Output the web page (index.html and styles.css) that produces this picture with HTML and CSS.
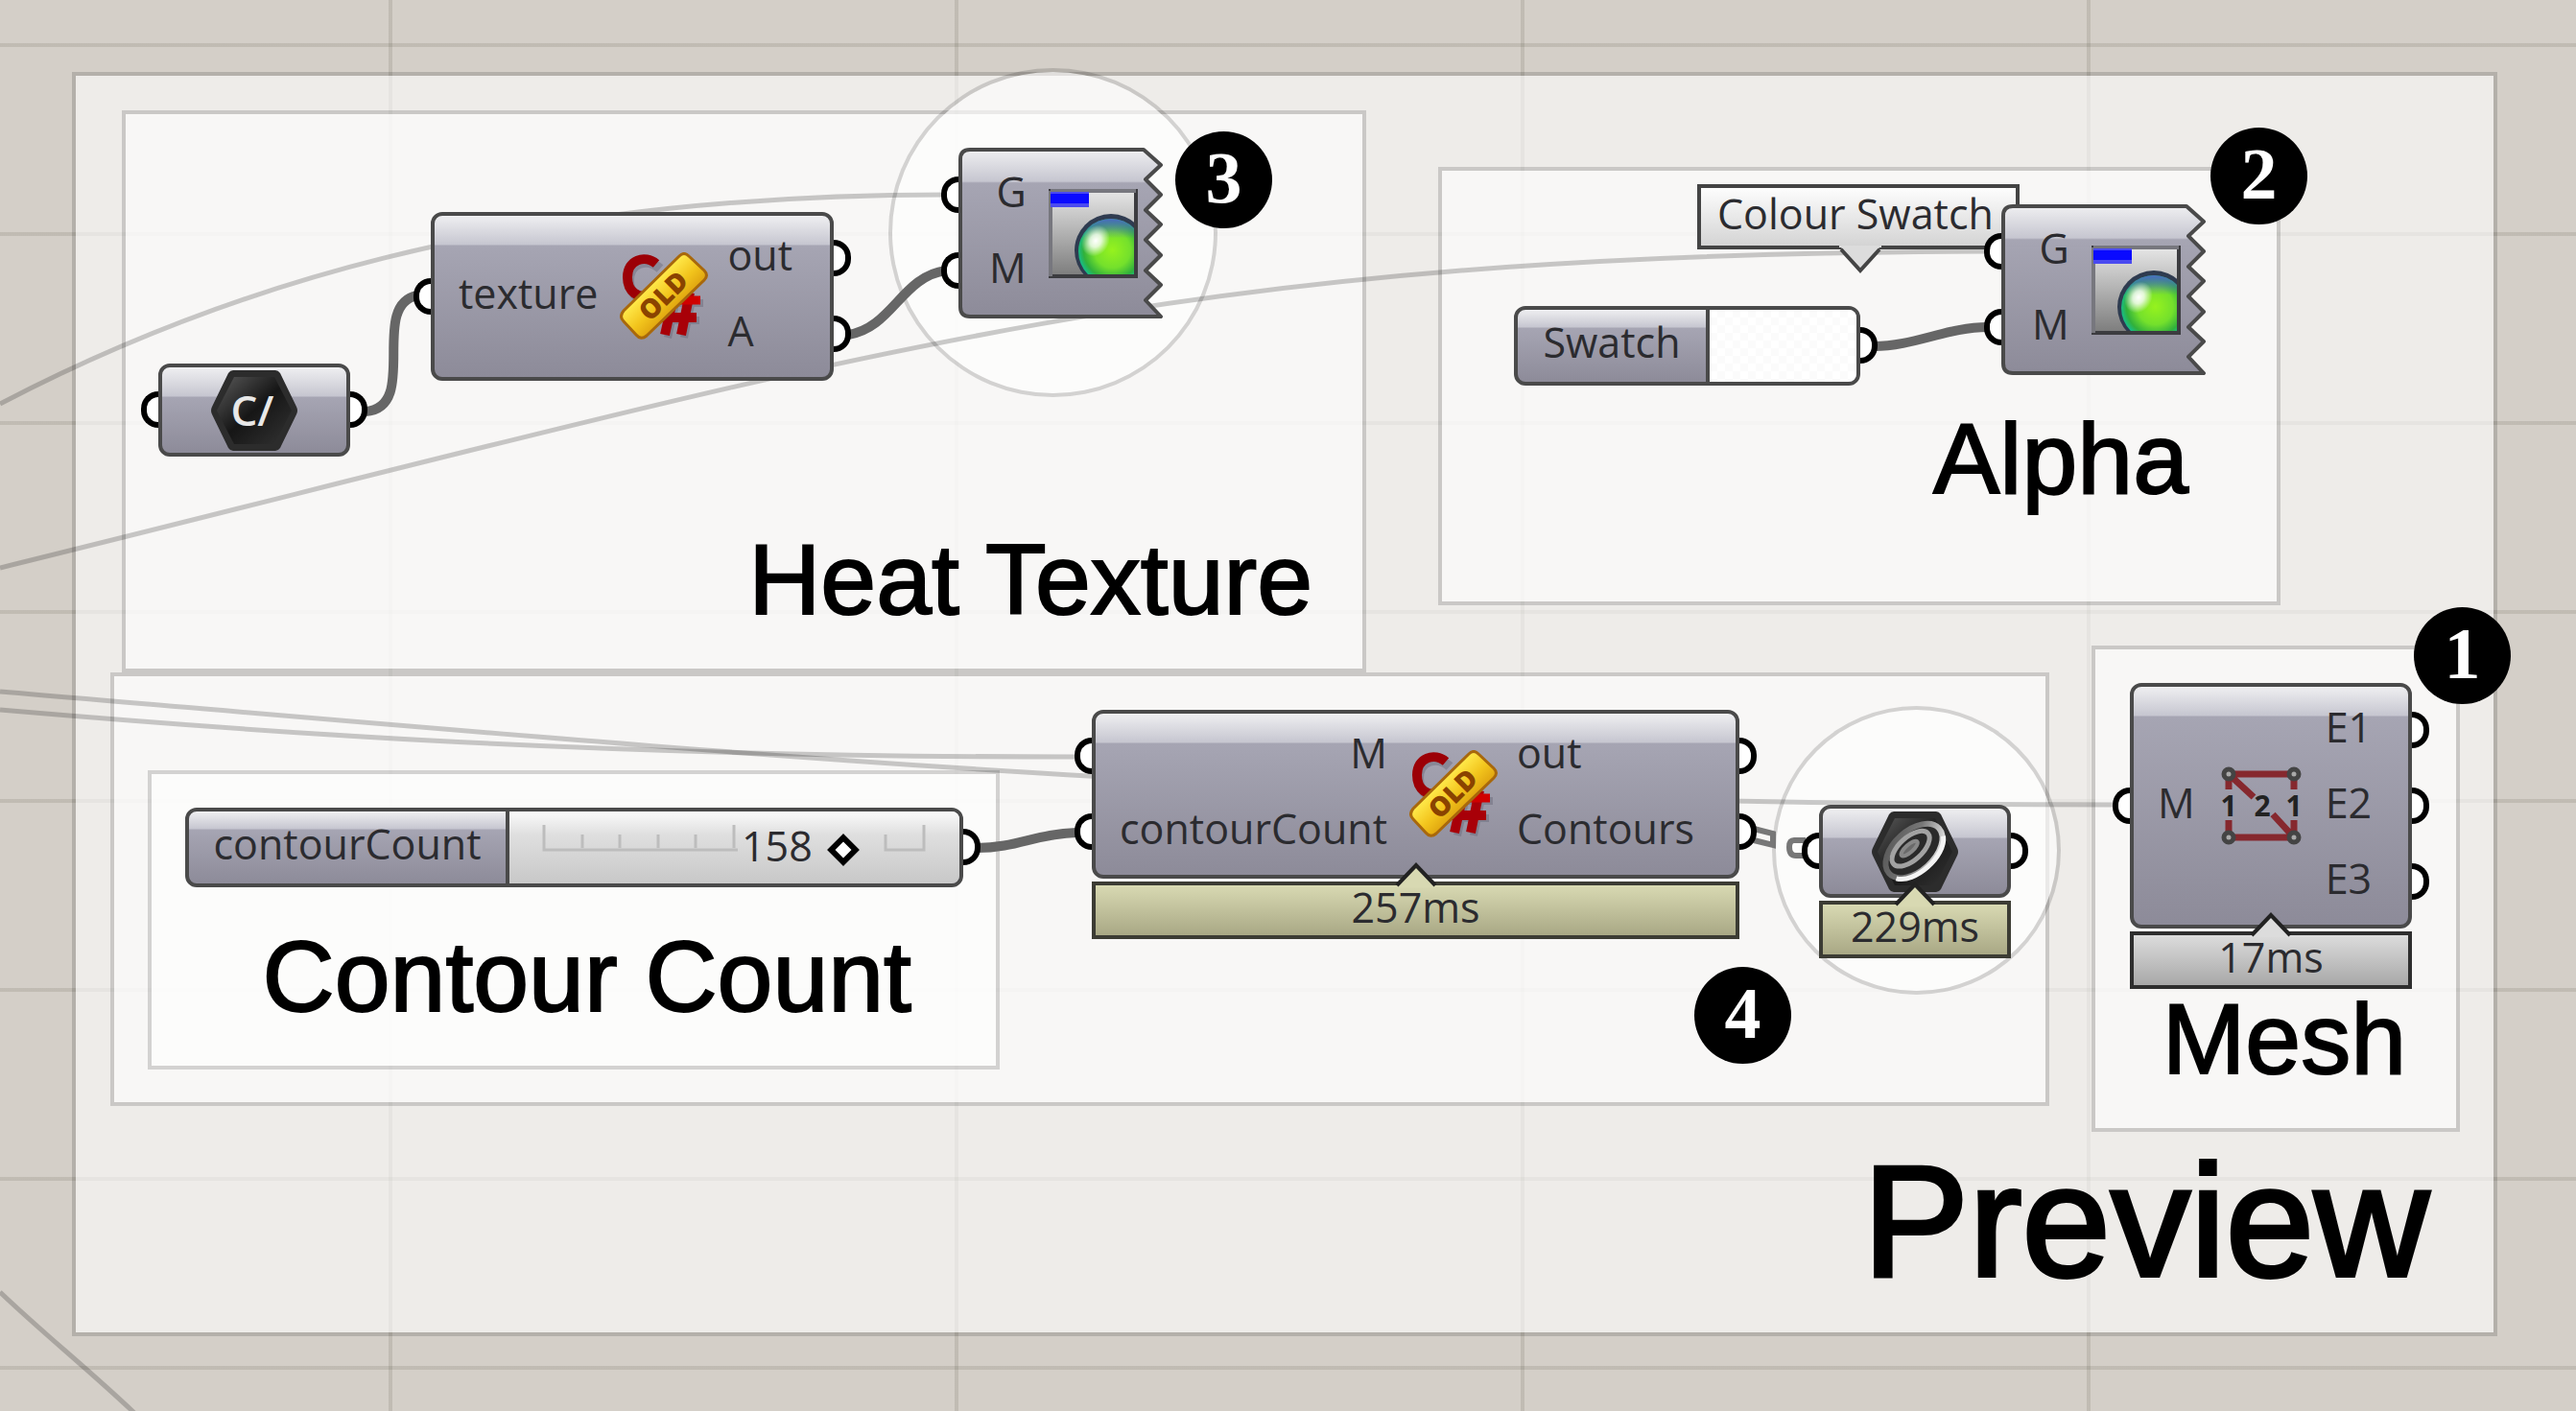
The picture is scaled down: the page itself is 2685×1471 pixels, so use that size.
FILE: index.html
```
<!DOCTYPE html>
<html lang="en">
<head>
<meta charset="utf-8">
<title>Preview definition</title>
<link rel="stylesheet" href="styles.css">
</head>
<body>
<svg class="defs" width="0" height="0" aria-hidden="true">
  <defs>
    <linearGradient id="body" x1="0" y1="0" x2="0" y2="1">
      <stop offset="0" stop-color="#efeff1"/><stop offset=".19" stop-color="#c6c6d0"/>
      <stop offset=".2" stop-color="#a6a5b3"/><stop offset="1" stop-color="#8d8b99"/>
    </linearGradient>
    <linearGradient id="gold" x1="0" y1="0" x2="1" y2="1">
      <stop offset=".2" stop-color="#d9b35c"/><stop offset=".36" stop-color="#ffe94a"/>
      <stop offset=".52" stop-color="#f2c41c"/><stop offset=".8" stop-color="#c77c00"/>
    </linearGradient>
    <linearGradient id="screen" x1="0" y1="0" x2="0" y2="1">
      <stop offset="0" stop-color="#e6e6e6"/><stop offset="1" stop-color="#7c7c7c"/>
    </linearGradient>
    <radialGradient id="ball" cx=".52" cy=".48" r=".55">
      <stop offset="0" stop-color="#96f21e"/><stop offset=".5" stop-color="#74e02c"/>
      <stop offset=".8" stop-color="#30b03c"/><stop offset="1" stop-color="#10bfa0"/>
    </radialGradient>
    <linearGradient id="sky" x1="0" y1="0" x2="0" y2="1">
      <stop offset="0" stop-color="#4a6cc0"/><stop offset=".3" stop-color="#4a6cc0" stop-opacity="0"/>
    </linearGradient>
    <radialGradient id="shine"><stop offset="0" stop-color="#fff"/><stop offset=".4" stop-color="#fff" stop-opacity=".8"/><stop offset="1" stop-color="#fff" stop-opacity="0"/></radialGradient>
    <linearGradient id="dark" x1="0" y1="0" x2="1" y2="1">
      <stop offset="0" stop-color="#5a5a5a"/><stop offset=".5" stop-color="#161616"/><stop offset="1" stop-color="#333"/>
    </linearGradient>
    <linearGradient id="ring" x1="0" y1="0" x2="1" y2="1">
      <stop offset="0" stop-color="#555"/><stop offset=".5" stop-color="#777"/><stop offset="1" stop-color="#fff"/>
    </linearGradient>
    <symbol id="script" viewBox="0 0 92 92">
      <path d="M39 14C26 2 7 8 7 26c0 16 12 22 22 19" fill="none" stroke="#59586a" stroke-opacity=".35" stroke-width="10" transform="translate(3 3)"/>
      <path d="M38 12C26 2 8 8 8 26c0 16 12 22 22 19" fill="none" stroke="#9c0006" stroke-width="10"/>
      <path d="M56 46 47 86M73 42 64 86M44 68H80M50 50H84" fill="none" stroke="#59586a" stroke-opacity=".35" stroke-width="8" transform="translate(3 3)"/>
      <path d="M56 46 47 86M73 42 64 86M44 68H80" fill="none" stroke="#a80008" stroke-width="10"/>
      <path d="M50 50H84" stroke="#d00000" stroke-width="9"/>
      <path d="M62 4Q67-1 72 4L88 19Q93 24 88 29L28 87Q22 92 17 86L4 72Q-1 67 4 61Z" fill="url(#gold)" stroke="#a8680c" stroke-width="3"/>
      <text class="tag" transform="rotate(-45 46 46)" x="46" y="55" text-anchor="middle">OLD</text>
    </symbol>
    <symbol id="preview" viewBox="0 0 93 93">
      <clipPath id="frame"><rect x="3" y="3" width="87" height="87"/></clipPath>
      <rect x="2" y="2" width="89" height="89" fill="url(#screen)"/>
      <g clip-path="url(#frame)">
        <circle cx="65" cy="64" r="38" fill="#2f3b50"/>
        <circle cx="65" cy="65" r="34" fill="url(#ball)"/>
        <circle cx="65" cy="65" r="34" fill="url(#sky)"/>
        <ellipse cx="49" cy="54" rx="14" ry="17" transform="rotate(30 49 54)" fill="url(#shine)"/>
      </g>
      <rect x="2" y="2" width="89" height="89" fill="none" stroke="#3c3c40" stroke-width="4"/>
      <path d="M2 2V91M2 2H91" stroke="#77777e" stroke-width="4"/>
      <rect x="2" y="3" width="40" height="16" fill="#4a4af0"/>
      <rect x="2" y="5" width="40" height="10" fill="#0a0aff"/>
    </symbol>
    <symbol id="torn" viewBox="0 0 214 178">
      <path d="M12 2H193L211 18 195 33 211 49 195 65 211 80 195 96 211 112 195 128 211 143 195 159 211 176H12Q2 176 2 166V12Q2 2 12 2Z" fill="url(#body)" stroke="#4a4a4a" stroke-width="4" stroke-linejoin="round"/>
    </symbol>
    <symbol id="hexagon" viewBox="0 0 92 86">
      <path d="M24 1H68Q71 1 73 4L90 39Q92 43 90 47L73 82Q71 85 68 85H24Q21 85 19 82L2 47Q0 43 2 39L19 4Q21 1 24 1Z" fill="#2c2c2c"/>
      <path d="M25 8H67L85 43 67 78H25L7 43Z" fill="url(#dark)"/>
    </symbol>
  </defs>
</svg>

<main class="canvas">
  <section class="group g-preview"><h1 class="label label-xl">Preview</h1></section>
  <section class="group g-heat"><h2 class="label">Heat Texture</h2></section>
  <section class="group g-alpha"><h2 class="label">Alpha</h2></section>
  <section class="group g-contours"></section>
  <section class="group g-count"><h2 class="label">Contour Count</h2></section>
  <section class="group g-mesh"><h2 class="label">Mesh</h2></section>
  <div class="group ring ring-heat"></div>
  <div class="group ring ring-contours"></div>

  <svg class="wires" width="2685" height="1471" aria-hidden="true">
    <g class="faint">
      <path d="M0 421C220 306 520 203 985 203"/>
      <path d="M0 592C900 370 1200 264 2075 262"/>
      <path d="M0 721C740 783 1300 839 2205 839"/>
      <path d="M0 740C280 764 620 789 1120 789"/>
      <path d="M0 1347C45 1390 95 1430 140 1473"/>
    </g>
    <g class="strong">
      <path d="M381 429C438 425 384 318 435 308"/>
      <path d="M884 349C930 342 940 288 986 282"/>
      <path d="M1953 361C1995 361 2030 341 2072 341"/>
      <path d="M1018 884C1060 884 1080 869 1122 868"/>
    </g>
    <g class="double">
      <path d="M1828 864 1848 869V881L1828 876"/>
      <path d="M1882 876H1870Q1865 876 1865 883 1865 892 1872 892H1882"/>
    </g>
  </svg>

  <article class="node n-texture">
    <ul class="in"><li>texture</li></ul>
    <svg class="icon" width="92" height="92"><use href="#script"/></svg>
    <ul class="out"><li>out</li><li>A</li></ul>
  </article>

  <article class="node n-path">
    <ul class="in"><li></li></ul>
    <svg class="icon" width="92" height="86" viewBox="0 0 92 86"><use href="#hexagon"/><text class="path-text" x="44" y="59" text-anchor="middle">C/</text></svg>
    <ul class="out"><li></li></ul>
  </article>

  <article class="node torn n-heat">
    <svg class="shape" width="214" height="178"><use href="#torn"/></svg>
    <ul class="in"><li>G</li><li>M</li></ul>
    <svg class="icon" width="93" height="93"><use href="#preview"/></svg>
  </article>

  <div class="tip" role="tooltip">Colour Swatch
    <svg class="tip-arrow" width="44" height="30"><path d="M0 0H44V2H42L22 26 2 2H0Z" fill="#dcdcdc"/><path d="M2 4 22 26 42 4" fill="none" stroke="#444" stroke-width="4"/></svg>
  </div>

  <article class="node n-swatch">
    <label class="name" for="swatch">Swatch</label>
    <input class="swatch" id="swatch" type="color" value="#ffffff">
    <ul class="out"><li></li></ul>
  </article>

  <article class="node torn n-alpha">
    <svg class="shape" width="214" height="178"><use href="#torn"/></svg>
    <ul class="in"><li>G</li><li>M</li></ul>
    <svg class="icon" width="93" height="93"><use href="#preview"/></svg>
  </article>

  <article class="node n-slider">
    <label class="name" for="count">contourCount</label>
    <div class="track">
      <svg class="ticks" width="400" height="28" aria-hidden="true"><path d="M2 0V26H204M42 10V24M81 10V24M121 10V24M160 10V24M200 0V24M358 10V26H398V0"/></svg>
      <output class="value" for="count">158</output>
      <input class="range" id="count" type="range" min="0" max="200" value="158">
    </div>
    <ul class="out"><li></li></ul>
  </article>

  <article class="node n-contours">
    <ul class="in"><li>M</li><li>contourCount</li></ul>
    <svg class="icon" width="92" height="92"><use href="#script"/></svg>
    <ul class="out"><li>out</li><li>Contours</li></ul>
    <p class="time">257ms<svg class="notch" width="44" height="26"><path d="M2 26 22 3 42 26Z"/><path class="edge" d="M2 24 22 3 42 24"/></svg></p>
  </article>

  <article class="node n-curve">
    <ul class="in"><li></li></ul>
    <svg class="icon" width="92" height="86" viewBox="0 0 92 86"><use href="#hexagon"/>
      <g fill="none" transform="rotate(-42 45 42)">
        <ellipse cx="45" cy="42" rx="35" ry="21" fill="#2a2a2a" stroke="url(#ring)" stroke-width="6"/>
        <path d="M12 51C22 68 66 69 78 51" stroke="#f4f4f4" stroke-width="5"/>
        <ellipse cx="44" cy="38" rx="24" ry="12" stroke="#a2a2a2" stroke-width="5"/>
        <ellipse cx="43" cy="37" rx="11" ry="4" fill="#6a6a6a" stroke="#888" stroke-width="4"/>
      </g>
    </svg>
    <ul class="out"><li></li></ul>
    <p class="time">229ms<svg class="notch" width="44" height="26"><path d="M2 26 22 3 42 26Z"/><path class="edge" d="M2 24 22 3 42 24"/></svg></p>
  </article>

  <article class="node n-mesh">
    <ul class="in"><li>M</li></ul>
    <svg class="icon" width="84" height="82" viewBox="0 0 84 82">
      <path d="M8 8H76M8 74H76M8 8V24M76 8V24M8 56V74M76 56V74M8 8 34 32M54 50 76 74" fill="none" stroke="#86282e" stroke-width="7"/>
      <g fill="#a9a9a9" stroke="#444" stroke-width="5"><circle cx="8" cy="8" r="5"/><circle cx="76" cy="8" r="5"/><circle cx="8" cy="74" r="5"/><circle cx="76" cy="74" r="5"/></g>
      <g class="edge-text" text-anchor="middle"><text x="8" y="52">1</text><text x="43" y="52">2</text><text x="76" y="52">1</text></g>
    </svg>
    <ul class="out"><li>E1</li><li>E2</li><li>E3</li></ul>
    <p class="time grey">17ms<svg class="notch" width="44" height="26"><path d="M2 26 22 3 42 26Z"/><path class="edge" d="M2 24 22 3 42 24"/></svg></p>
  </article>

  <span class="badge b1">1</span>
  <span class="badge b2">2</span>
  <span class="badge b3">3</span>
  <span class="badge b4">4</span>
</main>
</body>
</html>
```
FILE: styles.css
```
*, *::before, *::after { box-sizing: border-box; }

body { margin: 0; }

ul, p, h1, h2 { margin: 0; padding: 0; list-style: none; }

.defs { position: absolute; }

/* Canvas with its grid */
.canvas {
  position: relative;
  width: 100%;
  min-height: 100vh;
  overflow: hidden;
  background-color: #d4cfc8;
  background-image:
    linear-gradient(90deg, rgba(60, 60, 40, .13) 4px, transparent 4px),
    linear-gradient(rgba(60, 60, 40, .13) 4px, transparent 4px);
  background-size: 590px 100%, 100% 197px;
  background-position: 405px 0, 0 45px;
  color: #2b2b2f;
  font-family: "Open Sans", "Noto Sans", sans-serif;
  font-size: 43px;
}

/* Groups */
.group {
  position: absolute;
  display: flex;
  justify-content: flex-end;
  align-items: flex-end;
  border: 4px solid rgba(0, 0, 0, .15);
  background: rgba(255, 255, 255, .6);
  background-clip: padding-box;
}

.g-preview  { left: 75px;   top: 75px;  width: 2528px; height: 1318px; padding: 0 67px 33px 0; }
.g-heat     { left: 127px;  top: 115px; width: 1297px; height: 586px;  padding: 0 52px 41px 0; }
.g-alpha    { left: 1499px; top: 174px; width: 878px;  height: 457px;  padding: 0 92px 97px 0; }
.g-contours { left: 115px;  top: 701px; width: 2021px; height: 452px; }
.g-count    { left: 154px;  top: 803px; width: 888px;  height: 312px;  padding: 0 88px 41px 0; }
.g-mesh     { left: 2180px; top: 673px; width: 384px;  height: 507px;  padding: 0 52px 41px 0; }

.ring { border-radius: 50%; }
.ring-heat     { left: 926px;  top: 71px;  width: 343px; height: 343px; }
.ring-contours { left: 1847px; top: 736px; width: 301px; height: 301px; }

.label {
  color: #000;
  font: 400 104px/1 "Liberation Sans", Arial, sans-serif;
  white-space: nowrap;
  -webkit-text-stroke: 2px #000;
}
.label-xl { font-size: 166px; -webkit-text-stroke-width: 4px; }

/* Wires */
.wires { position: absolute; left: 0; top: 0; fill: none; }
.faint { stroke: rgba(0, 0, 0, .2); stroke-width: 5; }
.strong { stroke: #666; stroke-width: 10; }
.double { stroke: #777; stroke-width: 6; }

/* Nodes */
.node {
  position: absolute;
  display: flex;
  align-items: center;
  border: 4px solid #4a4a4a;
  border-radius: 12px;
  background: linear-gradient(#efeff1, #c6c6d0 30px, #a6a5b3 31px, #8d8b99);
  line-height: 71px;
  white-space: nowrap;
}

.n-texture  { left: 449px;  top: 221px; width: 420px; height: 176px; }
.n-path     { left: 165px;  top: 379px; width: 200px; height: 97px; }
.n-heat     { left: 999px;  top: 154px; width: 214px; height: 178px; }
.n-alpha    { left: 2086px; top: 213px; width: 214px; height: 178px; }
.n-swatch   { left: 1578px; top: 319px; width: 361px; height: 83px; }
.n-slider   { left: 193px;  top: 842px; width: 811px; height: 83px; }
.n-contours { left: 1138px; top: 740px; width: 675px; height: 176px; }
.n-curve    { left: 1896px; top: 839px; width: 200px; height: 97px; }
.n-mesh     { left: 2220px; top: 712px; width: 294px; height: 256px; }

.n-path, .n-curve { justify-content: space-between; }

.in, .out { position: relative; }
.in { text-align: right; }
.in li, .out li { position: relative; height: 79px; padding-bottom: 8px; }
.in li:not(:empty) { padding-left: 25px; }
.icon { flex: none; margin: 0 20px 0 23px; }
.out { flex: 1; }
.n-path .out, .n-curve .out, .n-slider .out, .n-swatch .out { flex: none; }
.n-path .icon, .n-curve .icon { margin: 0; }
.n-mesh .icon { margin: 0 25px 0 27px; }

/* Half-round grips at the node's edges */
.in li::before, .out li::after {
  content: "";
  position: absolute;
  top: 20px;
  width: 18px;
  height: 38px;
  border: 6px solid #000;
  background: #fff;
}
.in li::before { left: -22px; border-right: 0; border-radius: 19px 0 0 19px; }
.out li::after { right: -22px; border-left: 0; border-radius: 0 19px 19px 0; }

.torn { border-color: transparent; background: none; }
.shape { position: absolute; left: -4px; top: -4px; }
.torn .in { z-index: 1; }
.torn .in li { padding-left: 28px; }
.torn .icon { position: relative; }

/* Swatch and slider */
.name {
  display: flex;
  align-items: center;
  justify-content: center;
  height: 100%;
  padding-bottom: 8px;
  border-right: 4px solid #4a4a4a;
}
.n-swatch, .n-slider { background: linear-gradient(#efeff1, #c6c6d0 18px, #a6a5b3 19px, #8d8b99); }
.n-swatch .name { width: 200px; }
.n-slider .name { width: 334px; }

.swatch {
  appearance: none;
  flex: 1;
  width: 0;
  height: 100%;
  padding: 0;
  border: 0;
  border-radius: 0 8px 8px 0;
  background: repeating-conic-gradient(#fbfbfb 0 25%, #fff 0 50%) 0 0 / 16px 16px;
}
.swatch::-webkit-color-swatch-wrapper { display: none; }

.track {
  display: grid;
  flex: 1;
  align-items: center;
  height: 100%;
  border-radius: 0 8px 8px 0;
  background: linear-gradient(#fbfbfb, #dfdfdf 24px, #c8c8c8);
}
.track > * { grid-area: 1 / 1; }
.ticks { margin: 0 0 23px 34px; fill: none; stroke: #bdbdbd; stroke-width: 3; }
.value { padding: 0 0 8px 242px; }

.range {
  appearance: none;
  width: 420px;
  height: 24px;
  margin: 0 0 0 23px;
  background: none;
}
.range::-webkit-slider-thumb {
  appearance: none;
  width: 24px;
  height: 24px;
  border: 6px solid #000;
  background: #fff;
  transform: rotate(45deg);
}

/* Run-time bars under the nodes */
.time {
  position: absolute;
  left: -4px;
  right: -4px;
  top: calc(100% + 7px);
  height: 60px;
  border: 4px solid #3c3c34;
  background: linear-gradient(#d8d9b2, #a9a885);
  line-height: 46px;
  text-align: center;
  fill: #d8d9b2;
}
.time.grey { border-color: #2e2e2e; background: linear-gradient(#dcdcdc, #a8a8a8); fill: #dcdcdc; }
.notch { position: absolute; left: calc(50% - 22px); bottom: calc(100% - 2px); }
.edge { fill: none; stroke: #222; stroke-width: 4; }

/* Name tip over the swatch */
.tip {
  position: absolute;
  left: 1769px;
  top: 192px;
  width: 336px;
  height: 68px;
  padding-left: 17px;
  border: 4px solid #444;
  background: linear-gradient(#fdfdfd, #d4d4d4);
  line-height: 54px;
  white-space: nowrap;
}
.tip-arrow { position: absolute; left: 144px; top: 60px; }

/* Numbered callouts */
.badge {
  position: absolute;
  width: 101px;
  height: 101px;
  border-radius: 50%;
  background: #000;
  color: #fff;
  font: 700 76px/96px "Liberation Serif", "Times New Roman", serif;
  text-align: center;
}
.b1 { left: 2516px; top: 633px; }
.b2 { left: 2304px; top: 133px; }
.b3 { left: 1225px; top: 137px; }
.b4 { left: 1766px; top: 1008px; }

/* Lettering inside icons */
.tag { fill: #8a4300; font-size: 28px; font-weight: 800; }
.path-text { fill: #e8e8e8; font-size: 44px; font-weight: 600; }
.edge-text { fill: #222; font-size: 30px; font-weight: 700; }
```
